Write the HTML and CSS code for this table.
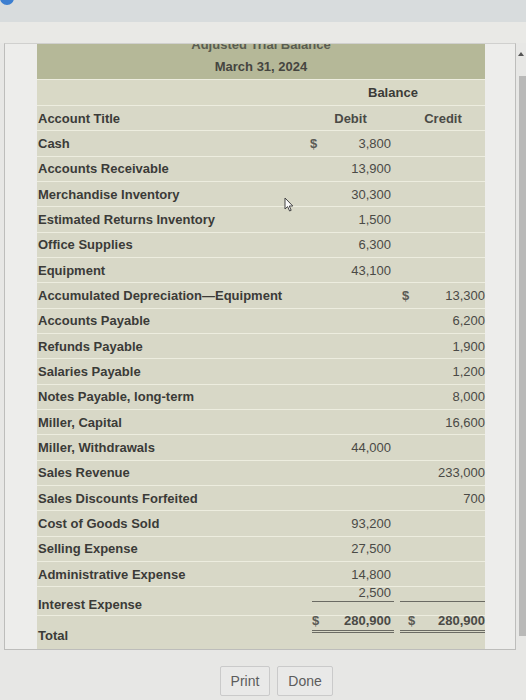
FILE: index.html
```html
<!DOCTYPE html>
<html>
<head>
<meta charset="utf-8">
<link rel="stylesheet" href="styles.css">
</head>
<body>
<div class="topbar"><span class="dot"></span></div>
<div class="band"></div>
<div class="panel">
  <div class="sheet">
    <div class="head">
      <div class="title">Adjusted Trial Balance</div>
      <div class="date">March 31, 2024</div>
    </div>
    <div class="balrow"><span class="bal">Balance</span></div>
    <div class="row hdr"><div class="lbl">Account Title</div><div class="num c">Debit</div><div class="num c">Credit</div></div>
    <div class="row"><div class="lbl">Cash</div><div class="num"><span class="cur">$</span><span>3,800</span></div><div class="num cr"></div></div>
    <div class="row"><div class="lbl">Accounts Receivable</div><div class="num"><span></span><span>13,900</span></div><div class="num cr"></div></div>
    <div class="row"><div class="lbl">Merchandise Inventory</div><div class="num"><span></span><span>30,300</span></div><div class="num cr"></div></div>
    <div class="row"><div class="lbl">Estimated Returns Inventory</div><div class="num"><span></span><span>1,500</span></div><div class="num cr"></div></div>
    <div class="row"><div class="lbl">Office Supplies</div><div class="num"><span></span><span>6,300</span></div><div class="num cr"></div></div>
    <div class="row"><div class="lbl">Equipment</div><div class="num"><span></span><span>43,100</span></div><div class="num cr"></div></div>
    <div class="row"><div class="lbl">Accumulated Depreciation—Equipment</div><div class="num"></div><div class="num cr"><span class="cur">$</span><span>13,300</span></div></div>
    <div class="row"><div class="lbl">Accounts Payable</div><div class="num"></div><div class="num cr"><span></span><span>6,200</span></div></div>
    <div class="row"><div class="lbl">Refunds Payable</div><div class="num"></div><div class="num cr"><span></span><span>1,900</span></div></div>
    <div class="row"><div class="lbl">Salaries Payable</div><div class="num"></div><div class="num cr"><span></span><span>1,200</span></div></div>
    <div class="row"><div class="lbl">Notes Payable, long-term</div><div class="num"></div><div class="num cr"><span></span><span>8,000</span></div></div>
    <div class="row"><div class="lbl">Miller, Capital</div><div class="num"></div><div class="num cr"><span></span><span>16,600</span></div></div>
    <div class="row"><div class="lbl">Miller, Withdrawals</div><div class="num"><span></span><span>44,000</span></div><div class="num cr"></div></div>
    <div class="row"><div class="lbl">Sales Revenue</div><div class="num"></div><div class="num cr"><span></span><span>233,000</span></div></div>
    <div class="row"><div class="lbl">Sales Discounts Forfeited</div><div class="num"></div><div class="num cr"><span></span><span>700</span></div></div>
    <div class="row"><div class="lbl">Cost of Goods Sold</div><div class="num"><span></span><span>93,200</span></div><div class="num cr"></div></div>
    <div class="row"><div class="lbl">Selling Expense</div><div class="num"><span></span><span>27,500</span></div><div class="num cr"></div></div>
    <div class="row"><div class="lbl">Administrative Expense</div><div class="num"><span></span><span>14,800</span></div><div class="num cr"></div></div>
    <div class="row int"><div class="lbl">Interest Expense</div><div class="num ul"><span></span><span>2,500</span></div><div class="num cr ul"></div></div>
    <div class="row tot"><div class="lbl">Total</div><div class="num dul"><span class="cur">$</span><span>280,900</span></div><div class="num cr dul"><span class="cur">$</span><span>280,900</span></div></div>
  </div>
  <div class="scroll"><span class="arrow"></span><span class="thumb"></span></div>
  <svg class="pointer" width="10" height="16" viewBox="0 0 10 16"><path d="M1 1 L1 12 L3.6 9.6 L5.6 14 L7.2 13.3 L5.3 9 L8.8 9 Z" fill="#fafafa" stroke="#444" stroke-width="1"/></svg>
</div>
<div class="buttons">
  <button class="btn print">Print</button>
  <button class="btn done">Done</button>
</div>
</body>
</html>
```

FILE: styles.css
```css
html, body {
  margin: 0;
  padding: 0;
}
body {
  width: 526px;
  height: 700px;
  overflow: hidden;
  background: #e7e7e5;
  font-family: "Liberation Sans", Arial, sans-serif;
  color: #3b3b38;
}
.topbar {
  position: relative;
  height: 22px;
  background: #d8dcdd;
}
.dot {
  position: absolute;
  left: 0;
  top: -9px;
  width: 14px;
  height: 14px;
  border-radius: 50%;
  background: #3d7fd0;
}
.band {
  height: 21px;
  background: #e9e9e6;
}
.panel {
  position: relative;
  margin-left: 4px;
  width: 512px;
  height: 607px;
  box-sizing: border-box;
  border: 1px solid #bdbdbb;
  border-top-color: #d0d0ce;
  background: #ededeb;
  padding-left: 32px;
}
.sheet {
  width: 448px;
  background: #ededdf;
}
.head {
  height: 35px;
  overflow: hidden;
  background: #b5b898;
  text-align: center;
  font-weight: bold;
  font-size: 13px;
  color: #454540;
}
.title {
  margin-top: -7px;
  height: 15px;
  line-height: 15px;
  color: #5a5d50;
}
.date {
  margin-top: 7px;
  line-height: 16px;
}
.balrow {
  margin-top: 1px;
  height: 25px;
  background: #d9d9c6;
  display: flex;
  align-items: center;
  font-weight: bold;
  font-size: 13px;
}
.bal {
  margin-left: 331px;
}
.row {
  margin-top: 1px;
  height: 24.33px;
  display: grid;
  grid-template-columns: 263px 94px 91px;
  background: #d8d8c7;
  font-size: 13px;
}
.lbl {
  font-weight: bold;
  padding-left: 1px;
  display: flex;
  align-items: center;
  white-space: nowrap;
}
.hdr .c {
  justify-content: center;
  font-weight: bold;
}
.num {
  display: flex;
  align-items: center;
  justify-content: space-between;
  padding: 0 3px 0 10px;
  color: #4a4a46;
}
.num.cr {
  padding: 0 0 0 8px;
}
.cur {
  font-weight: bold;
  color: #5a5a55;
}
.row.int {
  height: 28px;
}
.int .lbl {
  align-items: flex-end;
  padding-bottom: 3px;
}
.ul {
  align-self: start;
  align-items: flex-start;
  height: 17px;
  margin-top: -2px;
  box-shadow: inset 0 -1px 0 #6a6a63;
  margin-left: 12px;
  padding-left: 0;
  line-height: 15px;
}
.num.cr.ul {
  margin-left: 6px;
}
.row.tot {
  height: 33px;
}
.tot .lbl {
  align-items: flex-end;
  padding-bottom: 6px;
}
.dul {
  align-self: start;
  align-items: flex-start;
  height: 17px;
  margin-top: -3px;
  line-height: 15px;
  border-bottom: 3px double #6a6a63;
  margin-left: 12px;
  padding-left: 0;
  font-weight: bold;
}
.num.cr.dul {
  margin-left: 6px;
}
.scroll {
  position: absolute;
  right: -10px;
  top: 0;
  width: 8px;
  height: 100%;
}
.arrow {
  position: absolute;
  left: 1px;
  top: 8px;
  width: 0;
  height: 0;
  border-left: 3px solid transparent;
  border-right: 3px solid transparent;
  border-bottom: 4px solid #555;
}
.thumb {
  position: absolute;
  left: 2px;
  top: 32px;
  width: 7px;
  height: 560px;
  background: #b9b9b8;
}
.pointer {
  position: absolute;
  left: 279px;
  top: 153px;
}
.buttons {
  display: flex;
  gap: 7px;
  margin-top: 16px;
  padding-left: 220px;
}
.btn {
  height: 30px;
  box-sizing: border-box;
  border: 1px solid #cacaca;
  border-radius: 2px;
  background: #e9e9e8;
  font-family: "Liberation Sans", Arial, sans-serif;
  font-size: 14px;
  color: #5c5c5c;
  padding: 0;
}
.print {
  width: 50px;
}
.done {
  width: 56px;
}
```
